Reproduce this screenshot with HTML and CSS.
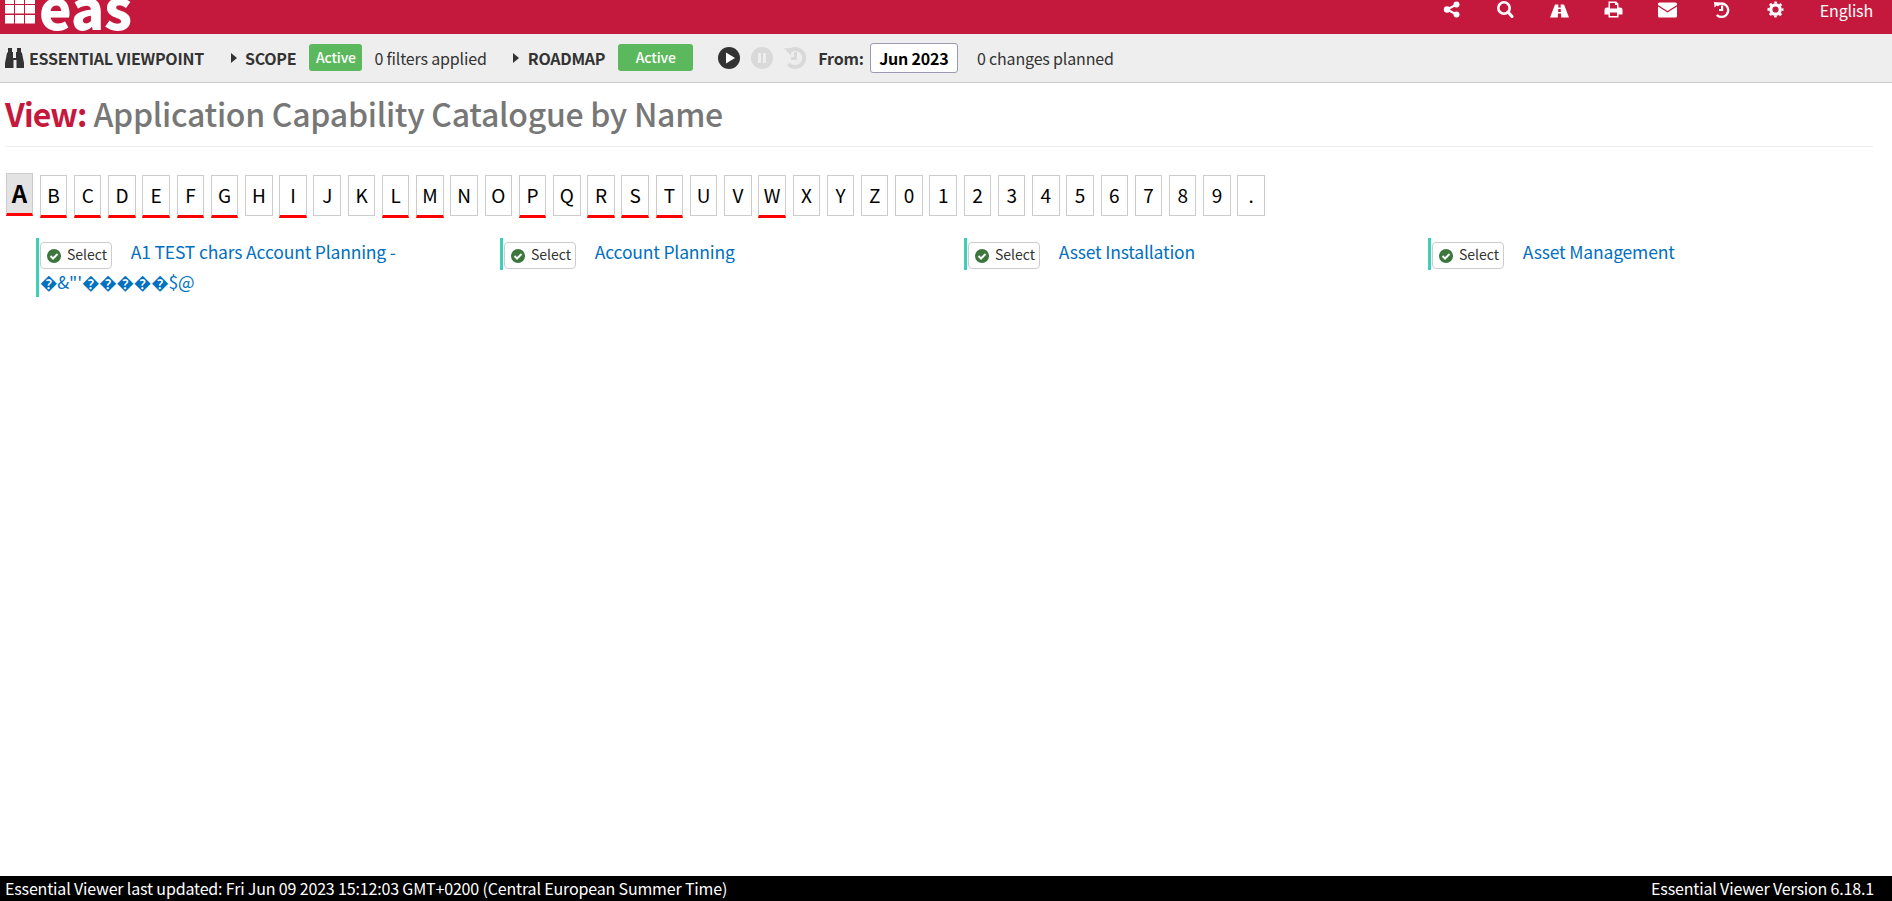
FILE: index.html
```html
<!DOCTYPE html>
<html lang="en">
<head>
  <meta charset="UTF-8" />
  <title>Application Capability Catalogue by Name</title>
  <link rel="stylesheet" href="styles.css">
</head>
<body>
  <header class="topbar">
    <div class="logo">
      <svg class="logo-grid" width="30" height="24" viewBox="0 0 30 24">
        <path fill="#fff" d="M0 0h9v4H0zM10 0h9v4h-9zM20 0h10v4H20zM0 5h9v8.500H0zM10 5h9v8.500h-9zM20 5h10v8.500H20zM0 15h9v8.500H0zM10 15h9v8.500h-9zM20 15h10v8.500H20z"/>
      </svg>
      <span class="logo-text">eas</span>
    </div>
    <nav class="topnav">
      <svg class="nav-icon" viewBox="0 0 19 16"><g fill="#fff"><circle cx="14.500" cy="3" r="3"/><circle cx="14.500" cy="13" r="3"/><circle cx="5" cy="8" r="3.200"/></g><path fill="none" stroke="#fff" stroke-width="2" d="M14.500 3L5 8l9.500 5"/></svg>
      <svg class="nav-icon" viewBox="0 0 19 17"><circle cx="8" cy="7" r="5.700" fill="none" stroke="#fff" stroke-width="2.600"/><path stroke="#fff" stroke-width="3" stroke-linecap="round" d="M12.500 11.500l3.500 4"/></svg>
      <svg class="nav-icon" viewBox="0 0 19 16"><path fill="#fff" d="M5 3h3.400l-.2 3h2.600l-.2-3H14l5 13h-7.800l-.2-4H8l-.2 4H0zM8.300 7.500l-.2 3h2.800l-.2-3z" fill-rule="evenodd"/></svg>
      <svg class="nav-icon" viewBox="0 0 19 16"><path fill="#fff" fill-rule="evenodd" d="M4.500 0h7.800l2.200 2.200V6H16a2.500 2.500 0 0 1 2.500 2.500V13h-4v3h-10v-3H.500V8.500A2.500 2.500 0 0 1 3 6h1.500zM6 1.500V7h7V3.500h-2v-2zM6 11v3.500h7V11z"/></svg>
      <svg class="nav-icon" viewBox="0 0 19 16"><path fill="#fff" d="M1.500 1h16A1.500 1.500 0 0 1 19 2.500v.9L9.500 9.500 0 3.400v-.9A1.500 1.500 0 0 1 1.500 1zM0 5l9.500 6.100L19 5v9.500a1.500 1.500 0 0 1-1.500 1.500h-16A1.500 1.500 0 0 1 0 14.500z"/></svg>
      <svg class="nav-icon" viewBox="0 0 19 16"><path fill="none" stroke="#fff" stroke-width="2.400" d="M4.800 4a6.700 6.700 0 1 1 0 9.500"/><path fill="#fff" d="M2 .5l6 .5-5.500 5zM9 4h2.200v5.500H7V7.500h2z"/></svg>
      <svg class="nav-icon" viewBox="0 0 19 16"><circle cx="9.500" cy="8" r="4.700" fill="none" stroke="#fff" stroke-width="3.200"/><circle cx="9.500" cy="8" r="7" fill="none" stroke="#fff" stroke-width="2" stroke-dasharray="2.750 2.750" stroke-dashoffset="1.400"/></svg>
      <span class="lang">English</span>
    </nav>
  </header>

  <div class="toolbar">
    <svg class="binoculars" width="19" height="20" viewBox="0 0 19 20"><path fill="#333" d="M3 0h4v4h1v6h3V4h1V0h4v4l1 1 2 10v5h-7.500v-8h-3v8H0v-5L2 5l1-1z"/></svg>
    <strong class="tool-title">ESSENTIAL VIEWPOINT</strong>
    <span class="caret caret-scope"></span>
    <strong class="tool-label">SCOPE</strong>
    <span class="badge">Active</span>
    <span class="tool-note filters">0 filters applied</span>
    <span class="caret"></span>
    <strong class="tool-label">ROADMAP</strong>
    <span class="badge badge-wide">Active</span>
    <svg class="player play" viewBox="0 0 22 22"><circle cx="11" cy="11" r="11" fill="#333"/><path fill="#fff" d="M8 5.500l9 5.500-9 5.500z"/></svg>
    <svg class="player" viewBox="0 0 22 22"><circle cx="11" cy="11" r="11" fill="#d9d9d9"/><path fill="#eee" d="M7 6h3v10H7zM12 6h3v10h-3z"/></svg>
    <svg class="player" viewBox="0 0 22 22"><path fill="none" stroke="#d9d9d9" stroke-width="4" d="M4.500 5A9 9 0 1 1 4.500 17"/><path fill="#d9d9d9" d="M0 1l7.500.5-.5 7.500zM10 5h3v8H7v-3h3z"/></svg>
    <strong class="from">From:</strong>
    <span class="date-box">Jun 2023</span>
    <span class="tool-note">0 changes planned</span>
  </div>

  <main class="content">
    <h1 class="page-title"><span class="view-word">View:</span> Application Capability Catalogue by Name</h1>

    <div class="alphabet">
      <a class="letter current has-items">A</a>
      <a class="letter has-items">B</a>
      <a class="letter has-items">C</a>
      <a class="letter has-items">D</a>
      <a class="letter has-items">E</a>
      <a class="letter has-items">F</a>
      <a class="letter has-items">G</a>
      <a class="letter">H</a>
      <a class="letter has-items">I</a>
      <a class="letter">J</a>
      <a class="letter">K</a>
      <a class="letter has-items">L</a>
      <a class="letter has-items">M</a>
      <a class="letter">N</a>
      <a class="letter">O</a>
      <a class="letter has-items">P</a>
      <a class="letter">Q</a>
      <a class="letter has-items">R</a>
      <a class="letter has-items">S</a>
      <a class="letter has-items">T</a>
      <a class="letter">U</a>
      <a class="letter">V</a>
      <a class="letter has-items">W</a>
      <a class="letter">X</a>
      <a class="letter">Y</a>
      <a class="letter">Z</a>
      <a class="letter">0</a>
      <a class="letter">1</a>
      <a class="letter">2</a>
      <a class="letter">3</a>
      <a class="letter">4</a>
      <a class="letter">5</a>
      <a class="letter">6</a>
      <a class="letter">7</a>
      <a class="letter">8</a>
      <a class="letter">9</a>
      <a class="letter">.</a>
    </div>

    <div class="catalogue">
      <div class="entry">
        <span class="select-btn"><svg class="check" viewBox="0 0 14 14"><circle cx="7" cy="7" r="7" fill="#3c763d"/><path fill="none" stroke="#fff" stroke-width="2" d="M3.500 7l2.500 2.500 4.500-4.500"/></svg>Select</span>
        <a class="entry-link">A1 TEST chars Account Planning - �&amp;"'�����$@</a>
      </div>
      <div class="entry">
        <span class="select-btn"><svg class="check" viewBox="0 0 14 14"><circle cx="7" cy="7" r="7" fill="#3c763d"/><path fill="none" stroke="#fff" stroke-width="2" d="M3.500 7l2.500 2.500 4.500-4.500"/></svg>Select</span>
        <a class="entry-link">Account Planning</a>
      </div>
      <div class="entry">
        <span class="select-btn"><svg class="check" viewBox="0 0 14 14"><circle cx="7" cy="7" r="7" fill="#3c763d"/><path fill="none" stroke="#fff" stroke-width="2" d="M3.500 7l2.500 2.500 4.500-4.500"/></svg>Select</span>
        <a class="entry-link">Asset Installation</a>
      </div>
      <div class="entry">
        <span class="select-btn"><svg class="check" viewBox="0 0 14 14"><circle cx="7" cy="7" r="7" fill="#3c763d"/><path fill="none" stroke="#fff" stroke-width="2" d="M3.500 7l2.500 2.500 4.500-4.500"/></svg>Select</span>
        <a class="entry-link">Asset Management</a>
      </div>
    </div>
  </main>

  <footer class="footer">
    <span>Essential Viewer last updated: Fri Jun 09 2023 15:12:03 GMT+0200 (Central European Summer Time)</span>
    <span>Essential Viewer Version 6.18.1</span>
  </footer>
</body>
</html>
```

FILE: styles.css
```css
html, body {
  height: 100%;
}

body {
  margin: 0;
  display: flex;
  flex-direction: column;
  min-height: 901px;
  box-sizing: border-box;
  overflow: hidden;
  font-family: "Noto Sans CJK SC", "Open Sans", sans-serif;
  font-size: 16px;
  letter-spacing: -.16px;
  color: #333;
  background-color: #fff;
}

.topbar {
  flex: none;
  height: 34px;
  display: flex;
  justify-content: space-between;
  overflow: hidden;
  background-color: #c4193d;
  color: #fff;
}

.logo {
  display: flex;
  align-items: flex-start;
  padding-left: 5px;
}

.logo-text {
  margin: -22px 0 0 4px;
  font-size: 55px;
  line-height: 56px;
  font-weight: 900;
}

.topnav {
  display: flex;
  align-items: flex-start;
  gap: 35px;
  padding-right: 19px;
}

.nav-icon {
  width: 19px;
  height: 17px;
  margin-top: 1px;
}

.lang {
  line-height: 20px;
}

.toolbar {
  flex: none;
  box-sizing: border-box;
  height: 49px;
  display: flex;
  align-items: center;
  padding: 0 0 1px 5px;
  background-color: #eee;
  border-bottom: 1px solid #ccc;
}

.binoculars {
  margin-right: 5px;
}

.tool-title, .tool-label {
  color: #333;
  letter-spacing: -.25px;
}

.caret {
  width: 0;
  height: 0;
  margin: 0 9px 0 26px;
  border-top: 5.500px solid transparent;
  border-bottom: 5.500px solid transparent;
  border-left: 6px solid #333;
}

.caret-scope {
  margin: 0 8px 0 27px;
}

.badge {
  width: 53px;
  height: 27px;
  margin-left: 13px;
  text-align: center;
  font-size: 14px;
  font-weight: 500;
  line-height: 27px;
  color: #fff;
  background-color: #5cb85c;
  border-radius: 3px;
}

.badge-wide {
  width: 75px;
}

.tool-note {
  margin-left: 19px;
}

.filters {
  margin-left: 12px;
}

.player {
  width: 22px;
  height: 22px;
  margin-right: 11px;
}

.play {
  margin-left: 25px;
}

.from {
  margin-left: 1px;
}

.date-box {
  width: 88px;
  height: 30px;
  box-sizing: border-box;
  margin-left: 6px;
  text-align: center;
  font-weight: 700;
  line-height: 28px;
  letter-spacing: -.2px;
  color: #000;
  background-color: #fff;
  border: 1px solid #9a9ab0;
  border-radius: 3px;
}

.content {
  flex: 1;
  padding: 0 19px 0 5px;
}

.page-title {
  margin: 0;
  padding: 10px 0 13px;
  border-bottom: 1px solid #eee;
  font-size: 32px;
  line-height: 40px;
  font-weight: 500;
  letter-spacing: -.28px;
  color: #777;
}

.view-word {
  color: #c4193d;
  font-weight: 700;
  letter-spacing: -.9px;
}

.alphabet {
  display: flex;
  align-items: flex-start;
  gap: 6.720px;
  margin: 26px 0 0 .5px;
}

.letter {
  box-sizing: border-box;
  width: 27.500px;
  height: 41px;
  margin-top: 2px;
  text-align: center;
  font-size: 19px;
  line-height: 38px;
  color: #000;
  border: 1px solid #ccc;
}

.has-items {
  border-bottom: 3px solid #f00;
  height: 43px;
}

.current {
  margin-top: 0;
  font-size: 24px;
  font-weight: 700;
  line-height: 38px;
  background-color: #e3e3e3;
}

.catalogue {
  display: grid;
  grid-template-columns: repeat(4, 464px);
  margin: 20px 0 0 31px;
}

.entry {
  width: 420px;
  padding: 0 0 2px 1px;
  box-sizing: border-box;
  border-left: 3px solid #3fcfb8;
  font-size: 17.500px;
  letter-spacing: -.17px;
  line-height: 27px;
  align-self: start;
}

.select-btn {
  display: inline-flex;
  align-items: center;
  box-sizing: border-box;
  width: 72px;
  height: 27px;
  margin: 4px 15px -1px 0;
  padding: 0 0 2px 6px;
  vertical-align: -3.500px;
  font-size: 14px;
  letter-spacing: 0;
  border: 1px solid #ccc;
  border-radius: 4px;
}

.check {
  width: 14px;
  height: 14px;
  margin: 2px 6px 0 0;
}

.entry-link {
  color: #0070c0;
}

.footer {
  flex: none;
  height: 25px;
  display: flex;
  justify-content: space-between;
  padding: 0 18px 0 5px;
  line-height: 24px;
  color: #fff;
  background-color: #000;
}
```
